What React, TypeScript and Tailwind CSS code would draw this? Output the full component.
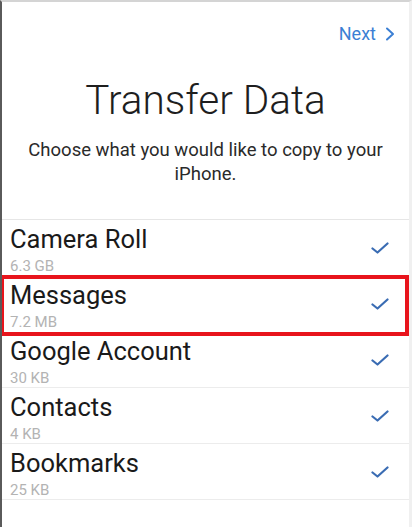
import React from "react";

const items = [
  { name: "Camera Roll", size: "6.3 GB" },
  { name: "Messages", size: "7.2 MB", highlight: true },
  { name: "Google Account", size: "30 KB" },
  { name: "Contacts", size: "4 KB" },
  { name: "Bookmarks", size: "25 KB" },
];

function Check() {
  return (
    <svg width="18" height="12" viewBox="0 0 18 12" fill="none">
      <path d="M1.5 6.5 L6.5 10.5 L16.5 1.5" stroke="#3a6cb3" strokeWidth="2.2" strokeLinecap="round" strokeLinejoin="round" />
    </svg>
  );
}

export default function App() {
  return (
    <div
      className="w-[412px] h-[527px] bg-white border-l-2 border-l-[#5a5a5a] border-t-2 border-t-[#d4d4d4] border-r-[3px] border-r-[#f0f0f0] overflow-hidden flex flex-col"
      style={{ fontFamily: "Roboto, 'Noto Sans', sans-serif" }}
    >
      <div className="flex justify-end items-center pt-[20px] pr-[14px] h-[44px]">
        <span className="text-[18px] leading-[22px] text-[#3b7fd4]">Next</span>
        <svg className="ml-[9px]" width="10" height="14" viewBox="0 0 10 14" fill="none">
          <path d="M2 1.5 L8 7 L2 12.5" stroke="#3b7fd4" strokeWidth="2" strokeLinecap="round" strokeLinejoin="round" />
        </svg>
      </div>
      <h1 className="mt-[29px] text-center text-[40.5px] leading-[50px] font-light text-[#1e1e1e]">
        Transfer Data
      </h1>
      <p className="mt-[13px] text-center text-[18.5px] leading-[24px] text-[#2a2a2a] px-[18px]">
        Choose what you would like to copy to your iPhone.
      </p>
      <div className="mt-[33px] border-t border-t-[#e6e6e6]">
        {items.map((it, i) => (
          <div
            key={it.name}
            className={`relative h-[56px] flex items-center justify-between pl-[8px] pr-[20px] ${
              i >= 2 ? "border-b border-b-[#ececec]" : ""
            }`}
          >
            <div className="flex flex-col self-start pt-[5px]">
              <span className="text-[25.5px] leading-[28px] text-[#1a1a1a]">{it.name}</span>
              <span className="text-[15px] leading-[18px] text-[#b3b3b3] mt-[4px]">{it.size}</span>
            </div>
            <Check />
            {it.highlight && (
              <div className="absolute left-[-2px] right-0 top-[-1px] bottom-[-4px] border-[4px] border-[#e8141c] pointer-events-none" />
            )}
          </div>
        ))}
      </div>
    </div>
  );
}
